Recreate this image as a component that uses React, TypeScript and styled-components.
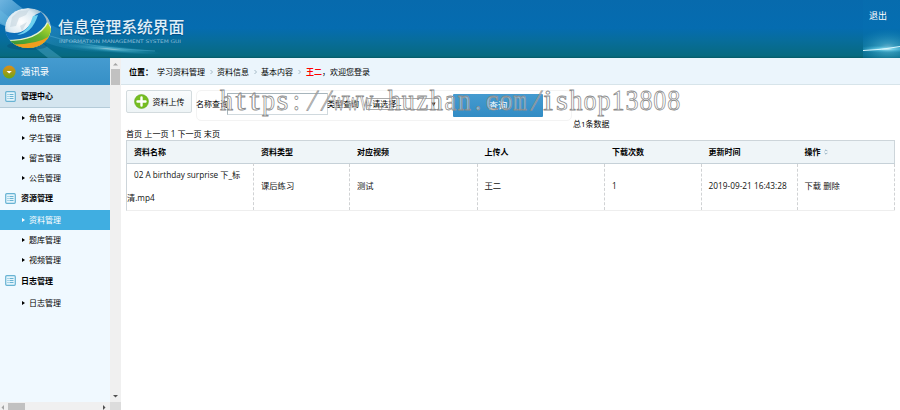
import React from 'react';
import styled, { createGlobalStyle } from 'styled-components';

const Global = createGlobalStyle`
  * { box-sizing: border-box; }
  html, body, #root { margin: 0; height: 410px; overflow: hidden; }
  body {
    background: #fff;
    color: #000;
    font: 8px/12px "Open Sans", "Noto Sans CJK SC", sans-serif;
    white-space: nowrap;
  }
`;

const Page = styled.div`
  position: relative;
  display: flex;
  flex-direction: column;
  width: 900px;
  height: 410px;
`;

const Header = styled.header`
  position: relative;
  flex: none;
  height: 58px;
  background: linear-gradient(#076aad 0, #056cb0 28px, #076d9c 40px, #076a80 56px, #055a66 58px);
`;
const HeaderArt = styled.svg`
  position: absolute;
  inset: 0;
`;
const Brand = styled.div`
  position: absolute;
  left: 58px;
  top: 17px;
  color: #e0eff8;
`;
const BrandName = styled.div`
  font-size: 15.8px;
  line-height: 21px;
  font-weight: 500;
  text-shadow: 0 1px 1px #034d85;
`;
const BrandSub = styled.svg`
  display: block;
`;
const Logout = styled.a`
  position: absolute;
  left: 869px;
  top: 10px;
  color: #fff;
  font-size: 9px;
`;

const Body = styled.div`
  display: flex;
  flex: 1;
  min-height: 0;
`;
const Frame = styled.aside`
  display: grid;
  grid-template: 344px 8px / 110px 11px;
  width: 121px;
`;
const Menu = styled.nav`
  background: #f0f9ff;
`;
const MenuTitle = styled.div`
  display: flex;
  align-items: center;
  gap: 5px;
  height: 27px;
  padding-left: 2px;
  font-size: 9.4px;
  color: #fff;
  background: linear-gradient(#459bd0, #3690c6);
`;
const Group = styled.div<{ $open?: boolean; $h: number }>`
  display: flex;
  align-items: center;
  gap: 5px;
  height: ${p => p.$h}px;
  padding-left: 5px;
  font-weight: 700;
  background: ${p => (p.$open ? '#d4e5ef' : 'transparent')};
  border-bottom: 1px solid ${p => (p.$open ? '#b4cbd8' : 'transparent')};
`;
const Item = styled.div<{ $active?: boolean }>`
  display: flex;
  align-items: center;
  gap: 4px;
  height: 19.9px;
  padding-left: 22px;
  color: ${p => (p.$active ? '#fff' : '#000')};
  background: ${p => (p.$active ? '#40aee1' : 'transparent')};
  &::before {
    content: '';
    border: 2.5px solid transparent;
    border-left: 3px solid currentColor;
    border-right: 0;
  }
`;
const Track = styled.div<{ $row?: boolean }>`
  display: flex;
  flex-direction: ${p => (p.$row ? 'row' : 'column')};
  align-items: center;
  background: #f0f0f0;
`;
const Thumb = styled.div<{ $w: number; $h: number }>`
  width: ${p => p.$w}px;
  height: ${p => p.$h}px;
  background: #c1c1c1;
`;
const Spacer = styled.div`
  flex: 1;
`;
const ArrowBox = styled.svg`
  flex: none;
  display: block;
`;
const Corner = styled.div`
  background: #dcdcdc;
`;

const Main = styled.main`
  flex: 1;
  min-width: 0;
`;
const Crumbs = styled.div`
  display: flex;
  align-items: center;
  height: 27px;
  padding: 1px 0 0 8px;
  background: #ebf5fc;
  border-bottom: 1px solid #d7e4ea;
`;
const CrumbLabel = styled.b`
  width: 28px;
`;
const CrumbSep = styled.svg`
  margin: 0 4.5px;
`;
const Red = styled.span`
  margin-left: 1px;
  color: #f00;
  font-weight: 700;
`;

const Tools = styled.div`
  display: flex;
  align-items: flex-start;
  height: 43px;
  padding: 5px 0 0 5px;
`;
const Upload = styled.button`
  display: flex;
  align-items: center;
  gap: 4px;
  width: 66px;
  height: 23px;
  margin-right: 4px;
  padding: 0 0 0 6.5px;
  border: 1px solid #d3dbde;
  border-radius: 2px;
  background: linear-gradient(#f9fbfc, #eef4f6);
  font: inherit;
`;
const Search = styled.div`
  display: flex;
  align-items: flex-start;
  width: 376px;
  height: 31px;
  border: 1px solid #f3f3f3;
  border-radius: 5px;
`;
const FieldLabel = styled.label<{ $w: number }>`
  width: ${p => p.$w}px;
  padding-top: 7px;
  text-indent: -1px;
`;
const TextField = styled.div`
  width: 101px;
  height: 22px;
  margin-top: 2px;
  border: 1px solid #d0d9de;
  border-top-color: #a7b5bc;
  border-left-color: #a7b5bc;
`;
const Select = styled.div`
  display: flex;
  align-items: center;
  justify-content: space-between;
  width: 73px;
  height: 12px;
  margin-top: 7px;
  padding-right: 2px;
  border: 1px solid #a9a9a9;
`;
const Query = styled.button`
  width: 90px;
  height: 23px;
  margin: 3px 0 0 14px;
  padding: 0;
  border: 0;
  border-radius: 1px;
  color: #fff;
  font: inherit;
  font-size: 9.3px;
  background: linear-gradient(#459bd0, #328cc4);
`;
const Total = styled.span`
  margin-top: 28px;
  padding-left: 1px;
`;
const Pager = styled.div`
  height: 12px;
  padding-left: 5px;
  font-size: 8.1px;
`;
const Table = styled.div`
  width: 769px;
  margin-left: 5px;
  border: 1px solid #cdd5da;
  border-bottom-color: #eee;
  border-right: 0;
`;
const Row = styled.div<{ $head?: boolean }>`
  display: grid;
  grid-template-columns: 127px 96px 127.5px 127.5px 96.5px 96px 97.5px;
  height: ${p => (p.$head ? 23 : 46)}px;
  font-weight: ${p => (p.$head ? 700 : 400)};
  color: ${p => (p.$head ? '#000' : '#111')};
  background: ${p => (p.$head ? '#eff5f8' : '#fff')};
  border-bottom: ${p => (p.$head ? '1px solid #c6d1d8' : '0')};
  border-right: ${p => (p.$head ? '1px solid #cdd5da' : '0')};
`;
const Cell = styled.div<{ $dashed?: boolean }>`
  display: flex;
  align-items: center;
  gap: 3px;
  padding: 0 0 ${p => (p.$dashed ? 2 : 0)}px 7px;
  font-size: ${p => (p.$dashed ? 8.3 : 8)}px;
  border-right: ${p => (p.$dashed ? '1px dashed #d0d2d4' : '1px solid transparent')};
`;
const NameCell = styled.div`
  margin-top: -1px;
  line-height: 23px;
  text-indent: 7px;
  font-size: 8.2px;
  border-right: 1px dashed #d0d2d4;
`;
const NameTail = styled.span`
  display: block;
  text-indent: 0;
`;
const Watermark = styled.svg`
  position: absolute;
  left: 219px;
  top: 84px;
  pointer-events: none;
`;

const Arrow = ({ d, color, w, h }: { d: string; color: string; w: number; h: number }) => (
  <ArrowBox width={w} height={h}><path d={d} fill={color} /></ArrowBox>
);

const ListIcon = () => (
  <svg width="11" height="11" viewBox="0 0 11 11" fill="none" stroke="#68b3d3">
    <rect x=".7" y=".7" width="9.6" height="9.6" rx="1" fill="#e5f5fc" strokeWidth="1.2" />
    <path d="M2.5 3.5h1M4.5 3.5h4M2.5 5.5h1M4.5 5.5h4M2.5 7.5h1M4.5 7.5h4" />
  </svg>
);

const Sep = () => (
  <CrumbSep width="3" height="6"><path d="M.5 1l2 2-2 2" fill="none" stroke="#92aab8" strokeWidth=".8" /></CrumbSep>
);

const HeaderDrawing = () => (
  <HeaderArt width="900" height="58">
    <defs>
      <linearGradient id="beam" x1="0" y1="0" x2="1" y2="0.3">
        <stop offset="0" stopColor="#9bd4f5" stopOpacity=".7" />
        <stop offset=".4" stopColor="#54aedd" stopOpacity=".28" />
        <stop offset="1" stopColor="#3fb2d5" stopOpacity="0" />
      </linearGradient>
      <radialGradient id="glow">
        <stop offset="0" stopColor="#fff" />
        <stop offset=".25" stopColor="#7fdcf2" stopOpacity=".75" />
        <stop offset="1" stopColor="#1c9cc8" stopOpacity="0" />
      </radialGradient>
      <radialGradient id="globe" cx=".35" cy=".35">
        <stop offset="0" stopColor="#fff" />
        <stop offset=".65" stopColor="#dbe9f1" />
        <stop offset="1" stopColor="#98b9cc" />
      </radialGradient>
      <linearGradient id="green" x1="0" y1="1" x2="1" y2="0">
        <stop offset="0" stopColor="#2c8c3b" />
        <stop offset=".6" stopColor="#65b32e" />
        <stop offset="1" stopColor="#d7e52e" />
      </linearGradient>
      <clipPath id="ball"><ellipse cx="28" cy="28" rx="23" ry="20" /></clipPath>
      <clipPath id="right"><rect x="863" width="37" height="58" /></clipPath>
    </defs>
    <path d="M0 0H12Q60 42 160 52Q80 55 50 44Q20 32 0 24Z" fill="url(#beam)" />
    <path d="M0 10Q35 38 62 58H48Q26 40 0 22Z" fill="#74c6e8" opacity=".3" />
    <path d="M50 36Q90 48 155 51" stroke="#72c5e8" strokeWidth="1.2" fill="none" opacity=".35" />
    <ellipse cx="110" cy="49" rx="52" ry="3.5" fill="url(#glow)" opacity=".65" transform="rotate(5 110 49)" />
    <ellipse cx="27" cy="46" rx="20" ry="4" fill="#044b73" opacity=".4" />
    <g clipPath="url(#ball)">
      <ellipse cx="28" cy="28" rx="23" ry="20" fill="url(#globe)" />
      <path d="M12 17l7-6 10-1-3 5-7 3-3 8-6 1zM20 26l7-4-5 9z" fill="#c3d3dd" opacity=".6" />
      <path d="M4 31Q26 39 35 15L41 12Q49 20 46 27Q34 45 4 40Z" fill="#0c6fb9" />
      <path d="M17 35Q29 31 33 16L38 15Q32 34 17 35Z" fill="#6dd1ef" />
      <path d="M5 40Q38 40 47 22L54 30V50H5Z" fill="#e7f4d1" />
      <path d="M7 41Q39 41 48 23L54 35V50H7Z" fill="url(#green)" />
      <path d="M10 44.5Q36 45 50 36V51H10Z" fill="#f29d1e" />
    </g>
    <g clipPath="url(#right)">
      <rect x="863" width="37" height="58" fill="#0874b5" opacity=".25" />
      <ellipse cx="888" cy="48" rx="34" ry="19" fill="url(#glow)" opacity=".5" />
      <ellipse cx="886" cy="49" rx="30" ry="4" fill="url(#glow)" />
      <path d="M863 50.5Q882 50 900 46.5" stroke="#d8f7ff" strokeWidth="1" fill="none" />
    </g>
  </HeaderArt>
);

// Horizontal scale that fits each serif glyph into a fixed-pitch cell.
const glyphScale: Record<string, number> = { w: 0.66, m: 0.6, t: 1.25, i: 1.2, s: 1.05, c: 1 };
const address = 'https://www.huzhan.com/ishop13808';
const fitGlyph = (c: string) => (c === '/' ? 'skewX(-14) scale(.9 1)' : `scale(${glyphScale[c] ?? 0.9} 1)`);

const groups = [
  { name: '管理中心', h: 23, items: ['角色管理', '学生管理', '留言管理', '公告管理'] },
  { name: '资源管理', h: 22.5, items: ['资料管理', '题库管理', '视频管理'] },
  { name: '日志管理', h: 23, items: ['日志管理'] },
];
const heads = ['资料名称', '资料类型', '对应视频', '上传人', '下载次数', '更新时间', '操作'];
const values = ['课后练习', '测试', '王二', '1', '2019-09-21 16:43:28', '下载 删除'];

export default function App() {
  return (
    <Page>
      <Global />
      <Header>
        <HeaderDrawing />
        <Brand>
          <BrandName>信息管理系统界面</BrandName>
          <BrandSub width="126" height="7">
            <text x="1" y="5.3" fontSize="4.8" fontFamily="DejaVu Sans" fill="#a7cfe3" opacity=".8" textLength="122" lengthAdjust="spacingAndGlyphs">INFORMATION MANAGEMENT SYSTEM GUI</text>
          </BrandSub>
        </Brand>
        <Logout>退出</Logout>
      </Header>
      <Body>
        <Frame>
          <Menu>
            <MenuTitle>
              <svg width="14" height="14">
                <defs><linearGradient id="badge" x2="0" y2="1"><stop stopColor="#e18c18" /><stop offset="1" stopColor="#69a818" /></linearGradient></defs>
                <circle cx="7.2" cy="7" r="6.4" fill="url(#badge)" />
                <path d="M4.5 6h5.4L7.2 8.5z" fill="#fff" />
              </svg>
              通讯录
            </MenuTitle>
            {groups.map((g, i) => (
              <React.Fragment key={g.name}>
                <Group $open={i === 0} $h={g.h}><ListIcon />{g.name}</Group>
                {g.items.map(t => <Item key={t} $active={t === '资料管理'}>{t}</Item>)}
              </React.Fragment>
            ))}
          </Menu>
          <Track>
            <Arrow w={11} h={11} color="#a3a3a3" d="M3 7.5L5.5 5 8 7.5z" />
            <Thumb $w={9} $h={16} />
            <Spacer />
            <Arrow w={11} h={11} color="#505050" d="M3 4L5.5 6.5 8 4z" />
          </Track>
          <Track $row>
            <Arrow w={8} h={8} color="#a3a3a3" d="M4 3L1.5 5.5 4 8z" />
            <Thumb $w={17} $h={7} />
            <Spacer />
            <Arrow w={10} h={8} color="#505050" d="M3 3l2.5 2.5L3 8z" />
          </Track>
          <Corner />
        </Frame>
        <Main>
          <Crumbs>
            <CrumbLabel>位置：</CrumbLabel>
            学习资料管理<Sep />资料信息<Sep />基本内容<Sep /><Red>王二</Red>，欢迎您登录
          </Crumbs>
          <Tools>
            <Upload>
              <svg width="15" height="15" viewBox="0 0 15 15">
                <circle cx="7.5" cy="7.5" r="7" fill="#76bd22" stroke="#5ba61a" strokeWidth=".5" />
                <path d="M7.5 3.5v8M3.5 7.5h8" stroke="#fff" strokeWidth="2.4" strokeLinecap="round" />
              </svg>
              资料上传
            </Upload>
            <Search>
              <FieldLabel $w={30}>名称查询</FieldLabel>
              <TextField />
              <FieldLabel $w={38}>类型查询</FieldLabel>
              <Select><span>--请选择--</span><svg width="5" height="5"><path d="M.5.5h4L2.5 4.5z" /></svg></Select>
              <Query>查询</Query>
            </Search>
            <Total>总1条数据</Total>
          </Tools>
          <Pager>首页 上一页 1 下一页 末页</Pager>
          <Table>
            <Row $head>
              {heads.map(t => (
                <Cell key={t}>
                  {t}
                  {t === '操作' && <svg width="4" height="6"><path d="M.6 2.2L2 .8l1.4 1.4M.6 3.8L2 5.2l1.4-1.4" fill="none" stroke="#7fa0b4" strokeWidth=".8" /></svg>}
                </Cell>
              ))}
            </Row>
            <Row>
              <NameCell>02 A birthday surprise 下_标<NameTail>清.mp4</NameTail></NameCell>
              {values.map(t => <Cell key={t} $dashed>{t}</Cell>)}
            </Row>
          </Table>
        </Main>
      </Body>
      <Watermark width="470" height="36" fontFamily="Liberation Serif" fontSize="29" textAnchor="middle" fill="#fff" fillOpacity=".4" stroke="#8c8c8c" strokeWidth=".8">
        {address.split('').map((c, i) => (
          <text key={i} transform={`translate(${7.5 + i * 13.98} 26) ${fitGlyph(c)}`}>{c}</text>
        ))}
      </Watermark>
    </Page>
  );
}
